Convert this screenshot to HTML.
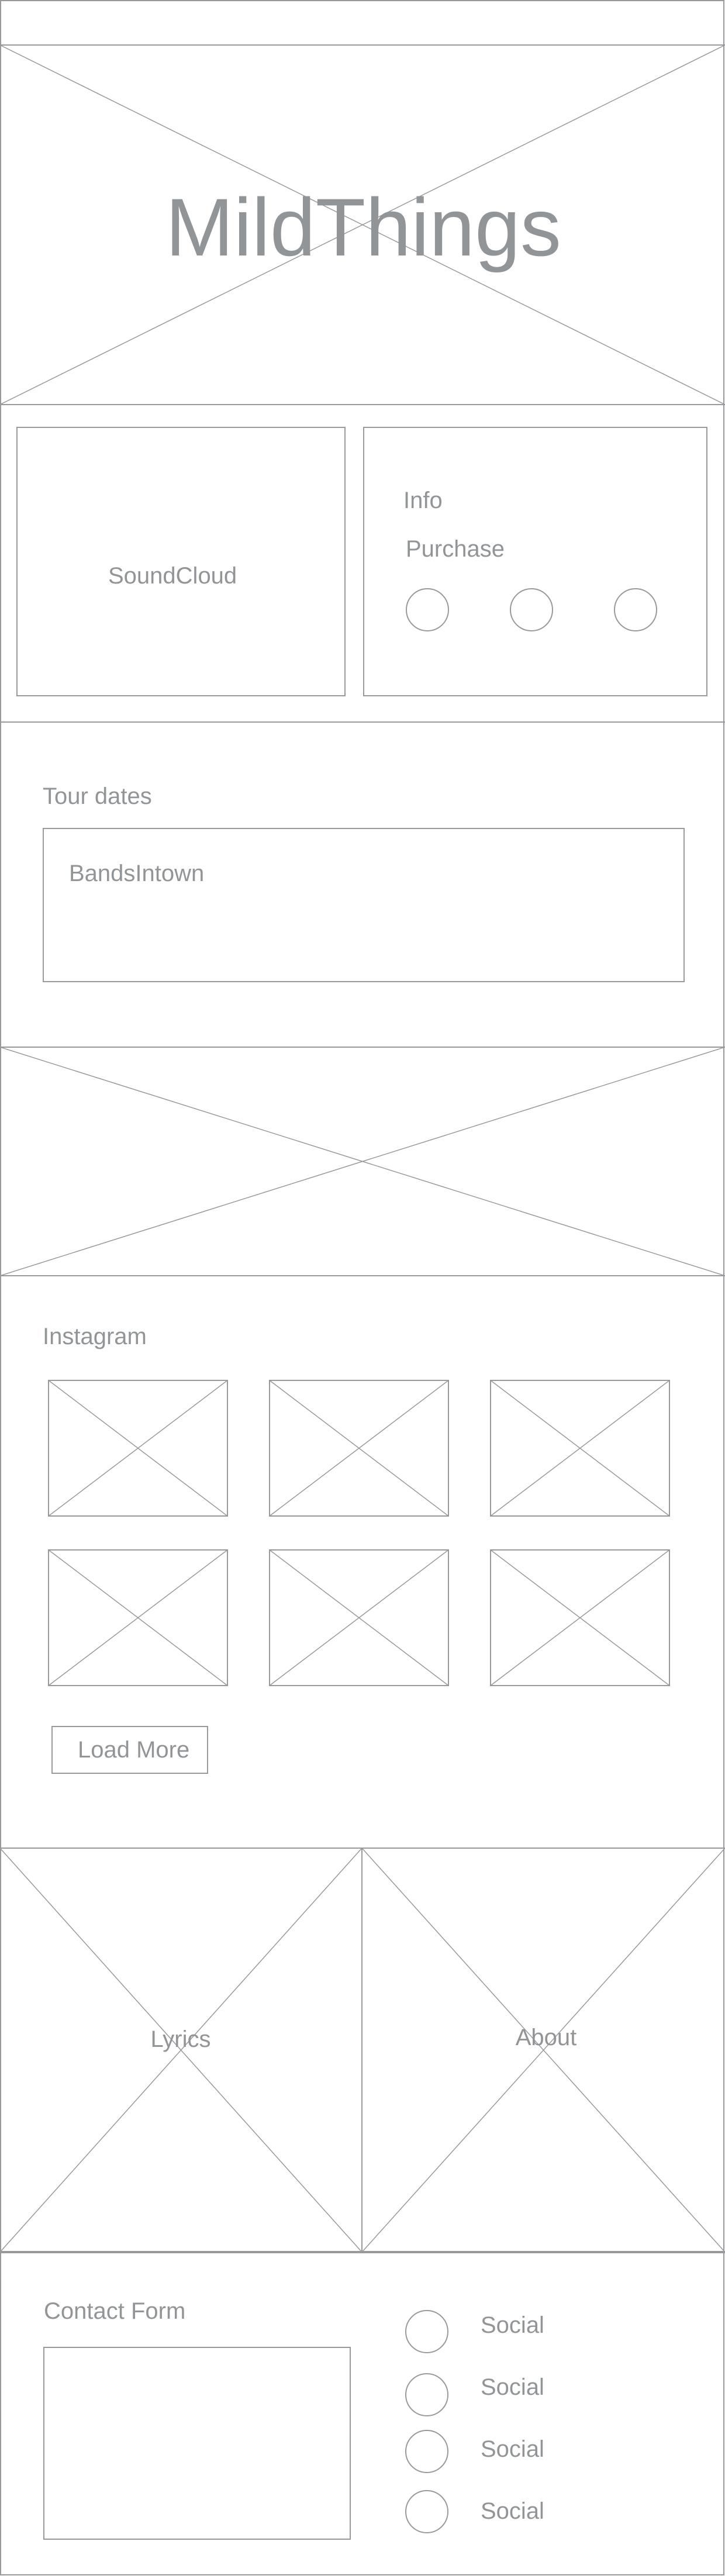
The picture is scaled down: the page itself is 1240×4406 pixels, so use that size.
<!DOCTYPE html>
<html><head><meta charset="utf-8"><style>
html,body{margin:0;padding:0;background:#fff;}
svg{display:block;}
text{font-family:"Liberation Sans",Arial,sans-serif;fill:#929598;}
</style></head><body>
<svg width="1240" height="4406" viewBox="0 0 1240 4406" xmlns="http://www.w3.org/2000/svg">
<g fill="none" stroke="#98999b" stroke-width="2">
<rect x="1" y="1" width="1237" height="4403"/>
<line x1="0" y1="77" x2="1240" y2="77"/>
<line x1="0" y1="692" x2="1240" y2="692"/>
<line x1="0" y1="1235" x2="1240" y2="1235"/>
<line x1="0" y1="1791" x2="1240" y2="1791"/>
<line x1="0" y1="2182" x2="1240" y2="2182"/>
<line x1="0" y1="3161" x2="1240" y2="3161"/>
<line x1="0" y1="3852" x2="1240" y2="3852" stroke-width="4"/>
<line x1="619" y1="3161" x2="619" y2="3852"/>
<rect x="29" y="731" width="561" height="459"/>
<rect x="622" y="731" width="587" height="459"/>
<circle cx="731" cy="1043" r="36"/>
<circle cx="909" cy="1043" r="36"/>
<circle cx="1087" cy="1043" r="36"/>
<rect x="74" y="1417" width="1096" height="262"/>
<rect x="83" y="2361" width="306" height="232"/>
<rect x="461" y="2361" width="306" height="232"/>
<rect x="839" y="2361" width="306" height="232"/>
<rect x="83" y="2651" width="306" height="232"/>
<rect x="461" y="2651" width="306" height="232"/>
<rect x="839" y="2651" width="306" height="232"/>
<rect x="89" y="2953" width="266" height="80"/>
<rect x="75" y="4015" width="524" height="328"/>
<circle cx="730" cy="3988" r="36"/>
<circle cx="730" cy="4096" r="36"/>
<circle cx="730" cy="4193" r="36"/>
<circle cx="730" cy="4296" r="36"/>
</g>
<g fill="none" stroke="#98999b" stroke-width="1.5">
<line x1="0" y1="77" x2="1240" y2="692"/><line x1="1240" y1="77" x2="0" y2="692"/>
<line x1="0" y1="1791" x2="1240" y2="2182"/><line x1="1240" y1="1791" x2="0" y2="2182"/>
<line x1="83" y1="2361" x2="389" y2="2593"/><line x1="389" y1="2361" x2="83" y2="2593"/>
<line x1="461" y1="2361" x2="767" y2="2593"/><line x1="767" y1="2361" x2="461" y2="2593"/>
<line x1="839" y1="2361" x2="1145" y2="2593"/><line x1="1145" y1="2361" x2="839" y2="2593"/>
<line x1="83" y1="2651" x2="389" y2="2883"/><line x1="389" y1="2651" x2="83" y2="2883"/>
<line x1="461" y1="2651" x2="767" y2="2883"/><line x1="767" y1="2651" x2="461" y2="2883"/>
<line x1="839" y1="2651" x2="1145" y2="2883"/><line x1="1145" y1="2651" x2="839" y2="2883"/>
<line x1="0" y1="3161" x2="619" y2="3852"/><line x1="619" y1="3161" x2="0" y2="3852"/>
<line x1="619" y1="3161" x2="1240" y2="3852"/><line x1="1240" y1="3161" x2="619" y2="3852"/>
</g>
<text x="283" y="437" font-size="140">MildThings</text>
<text x="185" y="998" font-size="40">SoundCloud</text>
<text x="690" y="869" font-size="40">Info</text>
<text x="694" y="952" font-size="40">Purchase</text>
<text x="73" y="1375" font-size="40">Tour dates</text>
<text x="118" y="1507" font-size="40">BandsIntown</text>
<text x="73" y="2299" font-size="40">Instagram</text>
<text x="133" y="3006" font-size="40">Load More</text>
<text x="309" y="3501" font-size="40" text-anchor="middle">Lyrics</text>
<text x="934" y="3498" font-size="40" text-anchor="middle">About</text>
<text x="75" y="3966" font-size="40">Contact Form</text>
<text x="822" y="3990" font-size="40">Social</text>
<text x="822" y="4096" font-size="40">Social</text>
<text x="822" y="4202" font-size="40">Social</text>
<text x="822" y="4308" font-size="40">Social</text>
</svg>
</body></html>
